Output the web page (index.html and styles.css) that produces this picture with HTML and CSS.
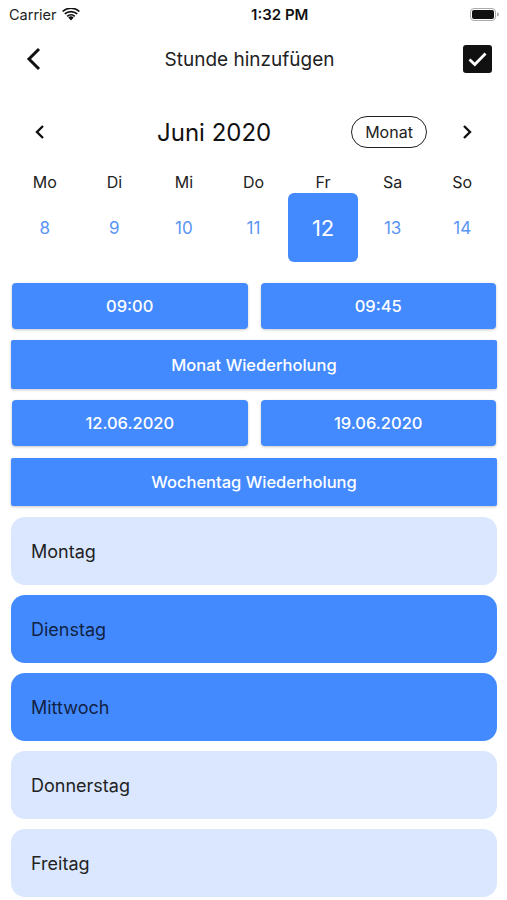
FILE: index.html
```html
<!DOCTYPE html>
<html lang="de">
<head>
    <meta charset="UTF-8">
    <meta name="viewport" content="width=device-width, initial-scale=1.0">
    <title>Stunde hinzufügen</title>
    <link rel="stylesheet" href="styles.css">
</head>
<body>
    <div class="status">
        <div class="carrier">
            Carrier
            <svg class="wifi" width="18" height="13" viewBox="0 0 18 13">
                <path d="M9 12.5 L6.3 9.6 A4 4 0 0 1 11.7 9.6 Z" fill="#111"/>
                <path d="M4.6 7.8 A6.5 6.5 0 0 1 13.4 7.8 L12.2 9 A4.8 4.8 0 0 0 5.8 9 Z" fill="#111"/>
                <path d="M2.2 5.3 A10 10 0 0 1 15.8 5.3 L14.6 6.6 A8.2 8.2 0 0 0 3.4 6.6 Z" fill="#111"/>
                <path d="M0 2.9 A13.2 13.2 0 0 1 18 2.9 L16.8 4.1 A11.5 11.5 0 0 0 1.2 4.1 Z" fill="#111"/>
            </svg>
        </div>
        <div class="time">1:32 PM</div>
        <svg class="battery" width="29" height="13" viewBox="0 0 29 13">
            <rect x="0.5" y="0.5" width="25" height="12" rx="3.5" fill="none" stroke="#aaa"/>
            <rect x="2" y="2" width="22" height="9" rx="2" fill="#111"/>
            <path d="M27 4.5 v4 a2 2 0 0 0 0 -4z" fill="#aaa"/>
        </svg>
    </div>

    <div class="nav">
        <svg class="back" width="16" height="24" viewBox="0 0 16 24">
            <path d="M13 2 L3 12 L13 22" fill="none" stroke="#111" stroke-width="3"/>
        </svg>
        <div class="nav-title">Stunde hinzufügen</div>
        <svg class="check" width="29" height="28" viewBox="0 0 29 28">
            <rect width="29" height="28" rx="3" fill="#111"/>
            <path d="M6.5 14.5 L11.8 19.5 L22.5 8.5" fill="none" stroke="#fff" stroke-width="2.8"/>
        </svg>
    </div>

    <div class="cal-head">
        <svg class="arrow" width="14" height="16" viewBox="0 0 14 16">
            <path d="M10 2 L4 8 L10 14" fill="none" stroke="#111" stroke-width="2.4"/>
        </svg>
        <div class="month">Juni 2020</div>
        <div class="pill">Monat</div>
        <svg class="arrow next" width="14" height="16" viewBox="0 0 14 16">
            <path d="M4 2 L10 8 L4 14" fill="none" stroke="#111" stroke-width="2.4"/>
        </svg>
    </div>

    <div class="week">
        <div class="wd">Mo</div>
        <div class="wd">Di</div>
        <div class="wd">Mi</div>
        <div class="wd">Do</div>
        <div class="wd">Fr</div>
        <div class="wd">Sa</div>
        <div class="wd">So</div>
        <div class="day">8</div>
        <div class="day">9</div>
        <div class="day">10</div>
        <div class="day">11</div>
        <div class="day selected">12</div>
        <div class="day">13</div>
        <div class="day">14</div>
    </div>

    <div class="form">
        <div class="pair">
            <div class="btn half">09:00</div>
            <div class="btn half">09:45</div>
        </div>
        <div class="btn wide">Monat Wiederholung</div>
        <div class="pair">
            <div class="btn half">12.06.2020</div>
            <div class="btn half">19.06.2020</div>
        </div>
        <div class="btn wide last">Wochentag Wiederholung</div>
    </div>

    <div class="days">
        <div class="item">Montag</div>
        <div class="item active">Dienstag</div>
        <div class="item active">Mittwoch</div>
        <div class="item">Donnerstag</div>
        <div class="item">Freitag</div>
    </div>
</body>
</html>
```

FILE: styles.css
```css
body {
    font-family: Inter, "Noto Sans", sans-serif;
    background-color: #fff;
    color: #111;
    margin: 0;
    padding: 0;
}
.status {
    height: 28px;
    display: flex;
    align-items: center;
    justify-content: space-between;
    padding: 0 8px 0 9px;
}
.carrier {
    display: flex;
    align-items: center;
    gap: 5px;
    font-size: 14.5px;
    color: #222;
}
.time {
    font-size: 15px;
    font-weight: 600;
    margin-left: 10px;
}
.nav {
    height: 62px;
    display: flex;
    align-items: center;
    padding: 0 15px 0 26px;
}
.nav-title {
    flex: 1;
    text-align: center;
    font-size: 19px;
    color: #222;
    padding-right: 6px;
}
.cal-head {
    display: flex;
    align-items: center;
    height: 34px;
    margin-top: 25px;
    padding-left: 33px;
}
.month {
    font-size: 24px;
    margin-left: 110px;
    width: 108px;
    white-space: nowrap;
}
.pill {
    margin-left: 86px;
    width: 74px;
    height: 30px;
    border: 1.5px solid #222;
    border-radius: 16px;
    display: flex;
    align-items: center;
    justify-content: center;
    font-size: 16px;
    color: #222;
}
.next {
    margin-left: 33px;
}
.week {
    display: grid;
    grid-template-columns: repeat(7, 1fr);
    padding: 0 10px;
    margin-top: 21px;
}
.wd {
    height: 23px;
    display: flex;
    align-items: center;
    justify-content: center;
    font-size: 16px;
    color: #222;
}
.day {
    height: 69px;
    display: flex;
    align-items: center;
    justify-content: center;
    font-size: 17px;
    color: #5a95f5;
}
.day.selected {
    background-color: #448aff;
    color: #fff;
    font-size: 22px;
    border-radius: 6px;
}
.form {
    padding: 0 10px 0 11px;
    margin-top: 21px;
}
.pair {
    display: flex;
    gap: 13px;
    padding: 0 1px;
}
.btn {
    background-color: #448aff;
    color: #fff;
    font-size: 16.5px;
    font-weight: 500;
    display: flex;
    align-items: center;
    justify-content: center;
    border-radius: 4px;
    box-shadow: 0 1px 3px rgba(0, 0, 0, 0.22);
}
.half {
    flex: 1;
    height: 46px;
}
.wide {
    height: 49px;
    margin: 11px 0;
    border-radius: 2px;
}
.wide.last {
    margin: 12px 0 0;
    height: 48px;
}
.days {
    padding: 0 10px 0 11px;
    margin-top: 11px;
    display: flex;
    flex-direction: column;
    gap: 10px;
}
.item {
    height: 68px;
    border-radius: 14px;
    background-color: #dae7ff;
    display: flex;
    align-items: center;
    padding-left: 20px;
    font-size: 18px;
    color: #222;
}
.item.active {
    background-color: #448aff;
    color: #112244;
}
```
